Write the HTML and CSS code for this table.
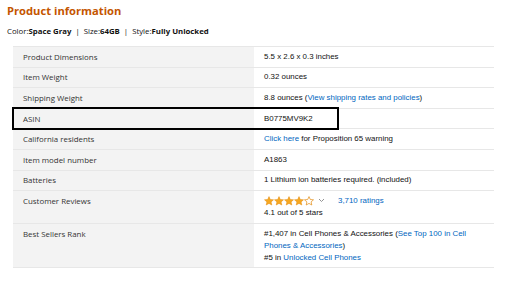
FILE: index.html
```html
<!DOCTYPE html>
<html>
  <head>
    <meta name="viewport" content="width=device-width, initial-scale=1.0">
    <title>Product information</title>
    <link rel="stylesheet" href="styles.css">
  </head>
  <body>
    <div class="main">
      <div class="header">Product information</div>
      <div class="variant">
        Color:<b>Space Gray</b><span class="sep">|</span>Size:<b>64GB</b><span class="sep">|</span>Style:<b>Fully Unlocked</b>
      </div>

      <table class="details">
        <tr>
          <td class="label">Product Dimensions</td>
          <td class="value">5.5 x 2.6 x 0.3 inches</td>
        </tr>
        <tr>
          <td class="label">Item Weight</td>
          <td class="value">0.32 ounces</td>
        </tr>
        <tr>
          <td class="label">Shipping Weight</td>
          <td class="value">8.8 ounces (<a href="#">View shipping rates and policies</a>)</td>
        </tr>
        <tr>
          <td class="label highlight-cell">ASIN<div class="highlight"></div></td>
          <td class="value">B0775MV9K2</td>
        </tr>
        <tr>
          <td class="label">California residents</td>
          <td class="value"><a href="#">Click here</a> for Proposition 65 warning</td>
        </tr>
        <tr>
          <td class="label">Item model number</td>
          <td class="value">A1863</td>
        </tr>
        <tr>
          <td class="label">Batteries</td>
          <td class="value">1 Lithium ion batteries required. (included)</td>
        </tr>
        <tr>
          <td class="label">Customer Reviews</td>
          <td class="value">
            <div class="rating">
              <svg class="stars" width="50" height="10" viewBox="0 0 50 10">
                <path d="M5 0.6l1.3 2.9 3.2 0.3-2.4 2.1 0.7 3.1L5 7.4 2.2 9l0.7-3.1L0.5 3.8l3.2-0.3z" fill="#f6a822" stroke="#e38a0e" stroke-width="0.5"/>
                <path transform="translate(10 0)" d="M5 0.6l1.3 2.9 3.2 0.3-2.4 2.1 0.7 3.1L5 7.4 2.2 9l0.7-3.1L0.5 3.8l3.2-0.3z" fill="#f6a822" stroke="#e38a0e" stroke-width="0.5"/>
                <path transform="translate(20 0)" d="M5 0.6l1.3 2.9 3.2 0.3-2.4 2.1 0.7 3.1L5 7.4 2.2 9l0.7-3.1L0.5 3.8l3.2-0.3z" fill="#f6a822" stroke="#e38a0e" stroke-width="0.5"/>
                <path transform="translate(30 0)" d="M5 0.6l1.3 2.9 3.2 0.3-2.4 2.1 0.7 3.1L5 7.4 2.2 9l0.7-3.1L0.5 3.8l3.2-0.3z" fill="#f6a822" stroke="#e38a0e" stroke-width="0.5"/>
                <path transform="translate(40 0)" d="M5 0.6l1.3 2.9 3.2 0.3-2.4 2.1 0.7 3.1L5 7.4 2.2 9l0.7-3.1L0.5 3.8l3.2-0.3z" fill="none" stroke="#e38a0e" stroke-width="0.7"/>
              </svg>
              <svg class="chevron" width="7" height="5" viewBox="0 0 7 5">
                <path d="M1 1l2.5 2.5L6 1" fill="none" stroke="#888" stroke-width="0.9"/>
              </svg>
              <a href="#" class="ratings-link">3,710 ratings</a>
            </div>
            <div>4.1 out of 5 stars</div>
          </td>
        </tr>
        <tr>
          <td class="label">Best Sellers Rank</td>
          <td class="value">
            #1,407 in Cell Phones &amp; Accessories (<a href="#">See Top 100 in Cell Phones &amp; Accessories</a>)<br>
            #5 in <a href="#">Unlocked Cell Phones</a>
          </td>
        </tr>
      </table>
    </div>
  </body>
</html>
```

FILE: styles.css
```css
* {
  box-sizing: border-box;
}

body {
  margin: 0px;
  padding: 0px;
  background-color: rgb(255, 255, 255);
  font-family: "Liberation Sans", Arial, sans-serif;
}

.main {
  padding: 4px 7px;
}

.header {
  font-family: "Open Sans", sans-serif;
  font-size: 11.2px;
  font-weight: 700;
  color: rgb(196, 85, 0);
  line-height: 14px;
}

.variant {
  font-family: "Open Sans", sans-serif;
  font-size: 7.8px;
  color: rgb(17, 17, 17);
  margin-top: 7px;
  line-height: 12px;
}

.variant b {
  font-weight: 700;
}

.sep {
  margin: 0px 4px;
}

.details {
  margin-top: 9px;
  margin-left: 6px;
  width: 481px;
  border-collapse: collapse;
  font-size: 7.9px;
  line-height: 12px;
  border-bottom: 1px solid rgb(231, 231, 231);
}

.details tr {
  border-top: 1px solid rgb(231, 231, 231);
}

.details td {
  padding: 3.8px 9px 3.8px 10px;
  vertical-align: top;
}

.label {
  width: 241px;
  background-color: rgb(243, 243, 243);
  font-family: "Open Sans", sans-serif;
  color: rgb(51, 51, 51);
}

.value {
  color: rgb(17, 17, 17);
}

a {
  color: rgb(0, 102, 192);
  text-decoration: none;
}

.highlight-cell {
  position: relative;
}

.highlight {
  position: absolute;
  left: -1px;
  top: -2px;
  width: 327px;
  height: 23px;
  border: 2px solid rgb(0, 0, 0);
}

.rating {
  display: flex;
  align-items: center;
}

.stars {
  display: block;
}

.chevron {
  display: block;
  margin-left: 4px;
}

.ratings-link {
  margin-left: 13px;
}
```
